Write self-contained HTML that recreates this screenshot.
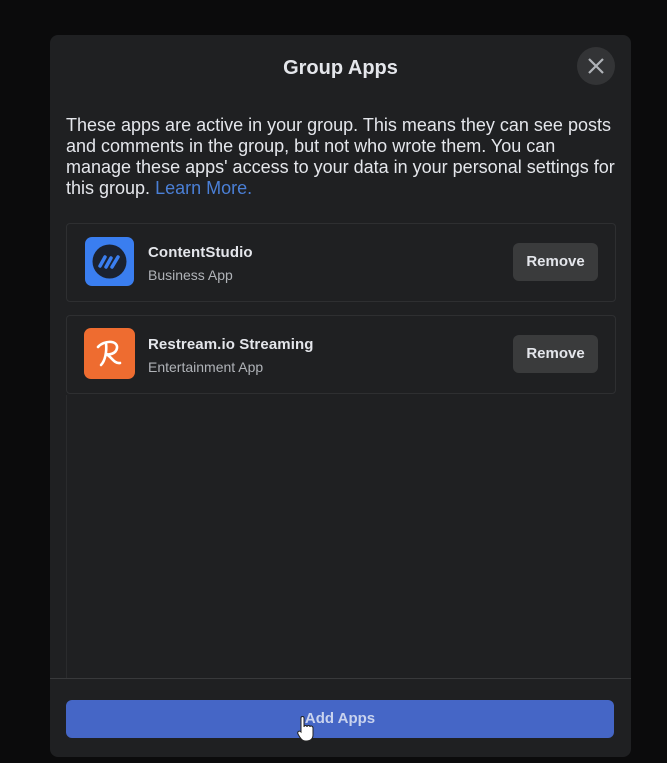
<!DOCTYPE html>
<html><head><style>
body{margin:0;width:667px;height:763px;background:#0b0b0c;font-family:"Liberation Sans",sans-serif;position:relative;overflow:hidden}
.modal{position:absolute;left:50px;top:35px;width:581px;height:722px;background:#1f2022;border-radius:8px}
.title{position:absolute;left:0;right:0;top:22px;text-align:center;color:#e4e6eb;font-weight:bold;font-size:20px}
.close{position:absolute;left:527px;top:12px;width:38px;height:38px;border-radius:50%;background:#333436}
.desc{position:absolute;left:16px;top:80px;width:560px;color:#e4e6eb;font-size:18px;line-height:21px;letter-spacing:0px;white-space:nowrap}
.desc a{color:#4a7fd6}
.row{position:absolute;left:16px;width:548px;height:77px;border:1px solid #2e2f31;border-radius:4px}
.icon{position:absolute;left:18px;top:13px;width:49px;height:49px;border-radius:7px}
.name{position:absolute;left:81px;top:20px;color:#e4e6eb;font-weight:bold;font-size:15px;letter-spacing:0.1px}
.sub{position:absolute;left:81px;top:43px;color:#b0b3b8;font-size:14px}
.rm{position:absolute;left:446px;top:19px;width:85px;height:38px;background:#3a3b3c;border-radius:6px;color:#e4e6eb;font-weight:bold;font-size:15px;text-align:center;line-height:38px}
.vline{position:absolute;left:16px;top:360px;width:1px;height:283px;background:#2a2b2d}
.div{position:absolute;left:0;right:0;top:643px;height:1px;background:#38393b}
.btn{position:absolute;left:16px;top:665px;width:548px;height:38px;background:#4566c6;border-radius:6px;color:#c9d3ee;font-weight:bold;font-size:15px;text-align:center;line-height:38px}
</style></head><body>
<div class="modal">
<div class="title">Group Apps</div>
<div class="close"><svg width="38" height="38"><path d="M12 12L26 26M26 12L12 26" stroke="#b0b3b8" stroke-width="2.2"/></svg></div>
<div class="desc">These apps are active in your group. This means they can see posts<br>and comments in the group, but not who wrote them. You can<br>manage these apps' access to your data in your personal settings for<br>this group. <a>Learn More.</a></div>
<div class="row" style="top:188px">
<div class="icon" style="background:#3a7ef0"><svg width="49" height="49"><circle cx="24.5" cy="24.5" r="17" fill="#1b2230"/><path d="M15 29L20 20M21 30L26 21M27 30L33 20" stroke="#3a7ef0" stroke-width="3.5" stroke-linecap="round"/></svg></div>
<div class="name">ContentStudio</div><div class="sub">Business App</div><div class="rm">Remove</div></div>
<div class="row" style="top:280px">
<div class="icon" style="left:17px;top:12px;width:51px;height:51px;background:#ee6c30"><svg width="51" height="51"><path d="M17 37C21 33 23 24 22 15M14 19C20 12 34 12 33 20C32 26 25 27 22 26C27 28 30 36 36 35" fill="none" stroke="#fff" stroke-width="2.6" stroke-linecap="round"/></svg></div>
<div class="name">Restream.io Streaming</div><div class="sub">Entertainment App</div><div class="rm">Remove</div></div>
<div class="vline"></div>
<div class="div"></div>
<div class="btn">Add Apps</div>
<svg style="position:absolute;left:246px;top:680px" width="20" height="28"><path d="M5 3C5 1 8 1 8 3V12C8 10 11 10 11 12C11 10 14 10 14 12C14 10 17 11 17 13V20C17 24 14 26 11 26H9C6 26 4 23 2 19C1 17 3 15 5 17Z" fill="#fff" stroke="#222" stroke-width="1"/></svg>
</div>
</body></html>
